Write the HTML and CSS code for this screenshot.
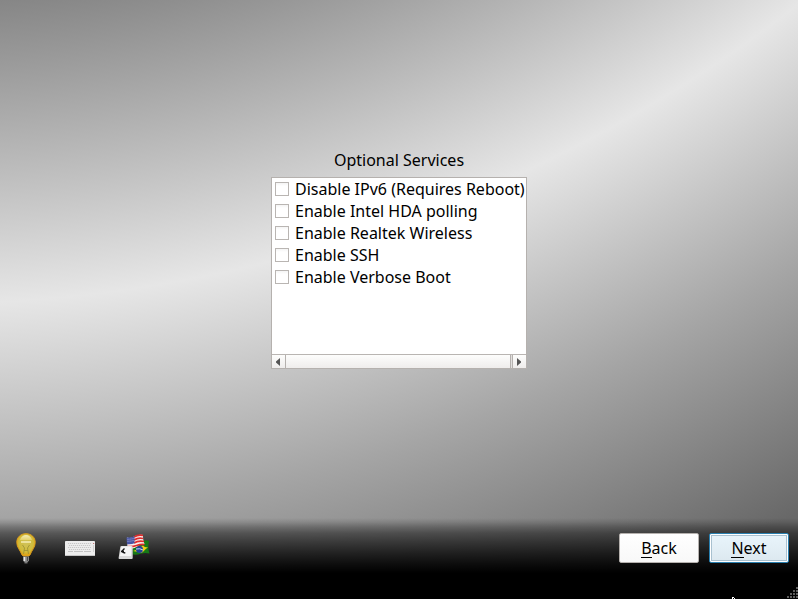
FILE: index.html
```
<!DOCTYPE html>
<html lang="en">
<head>
<meta charset="utf-8">
<title>Optional Services</title>
<link rel="stylesheet" href="styles.css">
</head>
<body>
<main class="content">
  <h1 class="title">Optional Services</h1>
  <section class="list">
    <ul class="items">
      <li class="item"><span class="box"></span>Disable IPv6 (Requires Reboot)</li>
      <li class="item"><span class="box"></span>Enable Intel HDA polling</li>
      <li class="item"><span class="box"></span>Enable Realtek Wireless</li>
      <li class="item"><span class="box"></span>Enable SSH</li>
      <li class="item"><span class="box"></span>Enable Verbose Boot</li>
    </ul>
    <div class="scrollbar">
      <span class="arrow"><svg width="5" height="8" viewBox="0 0 5 8"><path d="M4 0v8L0 4.500v-1z" fill="#555"/></svg></span>
      <span class="thumb"></span>
      <span class="arrow"><svg width="5" height="8" viewBox="0 0 5 8"><path d="M0 0v8l4-3.500v-1z" fill="#555"/></svg></span>
    </div>
  </section>
</main>
<footer class="footer">
  <div class="tools">
    <svg class="bulb" width="20" height="32" viewBox="0 0 20 32">
      <defs>
        <radialGradient id="glass" cx=".5" cy=".42" r=".6"><stop offset="0" stop-color="#cfc25a"/><stop offset=".65" stop-color="#d0bc3c"/><stop offset="1" stop-color="#e59a08"/></radialGradient>
        <linearGradient id="shine" x2="0" y2="1"><stop offset="0" stop-color="#fffbe0"/><stop offset="1" stop-color="#ead675"/></linearGradient>
      </defs>
      <path d="M10 1.700C4.500 1.700 .8 5.500 .8 10.300c0 5 3.300 7.800 4.800 11.700.4 1.400 1.200 2 2.200 2h4.400c1 0 1.800-.6 2.200-2 1.500-3.900 4.800-6.700 4.800-11.700C19.200 5.500 15.500 1.700 10 1.700z" fill="url(#glass)" stroke="#e0a01c"/>
      <path d="M4 8C5 4.500 7.500 3 10 3s5 1.500 6 5z" fill="url(#shine)" opacity=".75"/>
      <path d="M5 10h10" stroke="#fff8d0" stroke-width="1.200"/>
      <path d="M6.500 13l2 3-1 6M13.500 13l-2 3 1 6M8 18.500h4" stroke="#9b9135" stroke-width=".8" fill="none"/>
      <path d="M7 24.500h6v4l-1.200 1.500H8.200L7 28.500z" fill="#888"/>
      <path d="M8.500 25v4" stroke="#e6e6e6" stroke-width="1.500"/><path d="M11.500 25v4" stroke="#4c4c4c"/>
      <path d="M8.500 30.800h3" stroke="#a5a5a5"/>
    </svg>
    <svg class="keyboard" width="30" height="15" viewBox="0 0 30 15">
      <rect x="0" y="0" width="30" height="15" rx=".8" fill="#ededed"/>
      <path d="M0 14.500h30" stroke="#c4c4c4"/>
      <path d="M3 2.500h23M4 4.500h22M3 6.500h23M4 8.500h22" stroke="#bcbcbc" stroke-width=".8" stroke-dasharray="1.200 .8"/>
      <path d="M3 10.500h5m1 0h9m1 0h7" stroke="#c2c2c2"/>
      <path d="M28 2.500h1.200" stroke="#c87979"/>
      <path d="M28.500 4v7" stroke="#d2d2d2"/>
    </svg>
    <svg class="flags" width="33" height="26" viewBox="0 0 33 26">
      <path d="M15 10c6 1 8-5 16-3-1 5-1 8 .5 12.500-7-2-9 2-17 1z" fill="#167a16"/>
      <path d="M15 17c4-1 7-4 10-5.500 1 1 2.500 2 5 2-3 1.500-4 4-6.500 5.500-2-1-5-1-8.500-2z" fill="#edcf17"/>
      <circle cx="21.500" cy="15.500" r="3.500" fill="#24439a"/><path d="M18 15q4-1 7 1" stroke="#cde" fill="none"/>
      <path d="M9 3.500c6 2 8-4 16-2.500 0 3 0 5 1.500 9-7-1-7 6-17 4.500z" fill="#f8efef"/>
      <path d="M16 3q4-2.500 9-1.500M16 6q4-2.500 9-1.500M16 9q4-2.500 10-1.500M10 12.500c8 1 9-3 16.500-2" fill="none" stroke="#df2c2c" stroke-width="1.700"/>
      <path d="M8.500 3.500q4 .5 8-1.300v7q-3 1.500-7.500 1z" fill="#4754a4"/>
      <path d="M9.500 5.300q3.500 0 6.500-1M9.500 7.300q3.500 0 6.500-1" stroke="#b8bee4" stroke-width=".8" stroke-dasharray="1 1" fill="none"/>
      <path d="M3.500 12h10q1.200 0 1.200 1v11q0 1-1 1H1.500Q.5 25 .6 24l1.700-11q.2-1 1.200-1z" fill="#d8d8d8"/>
      <path d="M3.500 12.500h10l-.4 9.500H2z" fill="#f5f5f5"/>
      <path d="M6.500 14.500L4 17l1 1.500 2.300.5M3 17.500h3" fill="none" stroke="#161616" stroke-width="1.400"/>
    </svg>
  </div>
  <div class="buttons">
    <button class="button"><span class="key">B</span>ack</button>
    <button class="button primary"><span class="key">N</span>ext</button>
  </div>
  <svg class="pointer" width="4" height="2" viewBox="0 0 4 2"><path d="M0 0h2v1h1v1H2V1H1v1H0z" fill="#fff"/></svg>
  <svg class="grip" width="11" height="11" viewBox="0 0 11 11"><path d="M9 0h2v2H9zM6 3h2v2H6zM9 3h2v2H9zM3 6h2v2H3zM6 6h2v2H6zM9 6h2v2H9zM0 9h2v2H0zM3 9h2v2H3zM6 9h2v2H6zM9 9h2v2H9z" fill="#5c5c5c"/></svg>
</footer>
</body>
</html>
```
FILE: styles.css
```
* { box-sizing: border-box; }
body {
  margin: 0;
  width: 798px;
  height: 599px;
  overflow: hidden;
  display: flex;
  flex-direction: column;
  font: 16px/22px "Noto Sans", sans-serif;
  color: #000;
  background: radial-gradient(circle 2000px at -75px -1118px, #868686 1120px, #e6e6e6 1422px, #a5a5a5 1635px, #686868 1850px);
}
.content {
  height: 515px;
  padding-top: 149px;
  display: flex;
  flex-direction: column;
  align-items: center;
}
.title { margin: 0 0 6px; font: inherit; }
.list {
  width: 256px;
  height: 192px;
  border: 1px solid #b5b1ae;
  background: #fff;
  display: flex;
  flex-direction: column;
}
.items { flex: 1; margin: 0; padding: 0 0 0 3px; list-style: none; }
.item { display: flex; align-items: center; gap: 6px; height: 22px; white-space: nowrap; }
.box { width: 14px; height: 14px; border: 1px solid #b9b5b2; background: linear-gradient(#f4f4f4, #fff 3px); }
.scrollbar {
  height: 14px;
  display: flex;
  gap: 1px;
  border-top: 1px solid #b9b5b2;
  background: #e2e0df;
}
.arrow { width: 13px; display: flex; align-items: center; justify-content: center; background: linear-gradient(#fdfdfc, #efedec); }
.thumb { flex: 1; border: solid #b5b1ae; border-width: 0 1px; margin-left: -1px; background: linear-gradient(#fdfdfc, #efedec); }
.arrow:last-child { width: 14px; border-left: 1px solid #b5b1ae; }
.footer {
  position: relative;
  height: 84px;
  padding: 18px 9px 0 16px;
  display: flex;
  justify-content: space-between;
  align-items: flex-start;
  background: linear-gradient(transparent 3px, rgba(0,0,0,.1) 7px, rgba(0,0,0,.28) 12px, rgba(0,0,0,.45) 18px, rgba(0,0,0,.6) 27px, rgba(0,0,0,.76) 38px, rgba(0,0,0,.9) 49px, #000 58px);
}
.tools { display: flex; align-items: flex-start; }
.bulb { margin: -1px 29px 0 0; }
.keyboard { margin: 8px 23px 0 0; }
.flags { margin-top: 1px; }
.buttons { display: flex; gap: 10px; }
.button {
  width: 80px;
  height: 30px;
  padding: 0;
  font: inherit;
  color: #000;
  border: 1px solid #b5b1ae;
  border-radius: 2px;
  background: linear-gradient(#fff, #f8f8f8);
}
.key { border-bottom: 1px solid #000; display: inline-block; line-height: 17px; }
.primary {
  border-color: #2980b0;
  background: linear-gradient(#e9f5fc, #dce8ef);
  box-shadow: inset 0 0 0 1px #fff, inset 0 0 0 2px #a9c1d0;
}
.pointer { position: absolute; left: 732px; bottom: 0; }
.grip { position: absolute; right: 0; bottom: 1px; }
```
